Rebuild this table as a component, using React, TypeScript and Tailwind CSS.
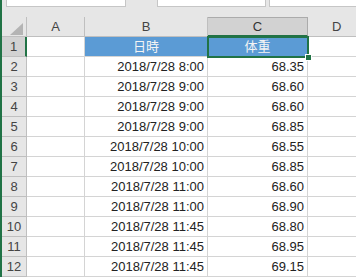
import React from 'react';

const rows: [string, string][] = [
    ['2018/7/28 8:00', '68.35'],
    ['2018/7/28 9:00', '68.60'],
    ['2018/7/28 9:00', '68.60'],
    ['2018/7/28 9:00', '68.85'],
    ['2018/7/28 10:00', '68.55'],
    ['2018/7/28 10:00', '68.85'],
    ['2018/7/28 11:00', '68.60'],
    ['2018/7/28 11:00', '68.90'],
    ['2018/7/28 11:45', '68.80'],
    ['2018/7/28 11:45', '68.95'],
    ['2018/7/28 11:45', '69.15'],
];

const font = { fontFamily: '"Liberation Sans", "Noto Sans CJK JP", sans-serif' };

export default function App() {
    return (
        <div
            className="w-[356px] h-[277px] overflow-hidden bg-white border-l-2 border-[#217346] text-[13px] text-[#222]"
            style={font}
        >
            {/* formula bar strip */}
            <div className="h-[17px] bg-[#e6e6e6] flex items-start">
                <div className="ml-[4px] w-[120px] h-[7px] bg-white border-x border-b border-[#c6c6c6]" />
                <div className="ml-[31px] w-[109px] h-[7px] bg-white border-x border-b border-[#c6c6c6]" />
                <div className="ml-[3px] flex-1 h-[7px] bg-white border-l border-b border-[#c6c6c6]" />
            </div>

            <div className="grid grid-cols-[25px_58px_123px_100px_1fr] auto-rows-[20px]">
                {/* column headers */}
                <div className="bg-[#e6e6e6] border-r border-b border-[#bfbfbf] relative">
                    <svg className="absolute left-[8px] top-[6px]" width="13" height="12" viewBox="0 0 13 12">
                        <polygon points="13,0 13,12 0,12" fill="#b4b4b4" />
                    </svg>
                </div>
                <div className="bg-[#e6e6e6] border-r border-b border-[#bfbfbf] flex items-center justify-center text-[#444]">A</div>
                <div className="bg-[#e6e6e6] border-r border-b border-[#bfbfbf] flex items-center justify-center text-[#444]">B</div>
                <div className="bg-[#d2d2d2] border-r border-t border-[#ababab] border-b-2 border-b-[#217346] flex items-center justify-center text-[#333]">C</div>
                <div className="bg-[#e6e6e6] border-b border-[#bfbfbf] flex items-center pl-[24px] text-[#444]">D</div>

                {/* row 1 */}
                <div className="bg-[#d2d2d2] border-r-2 border-r-[#217346] border-b border-[#bfbfbf] flex items-center justify-center text-[#444]">1</div>
                <div className="border-r border-b border-[#d4d4d4]" />
                <div className="bg-[#5b9bd5] border-r border-b border-[#d4d4d4] flex items-center justify-center text-[#f4f4f4]">日時</div>
                <div className="bg-[#5b9bd5] border-r border-b border-[#d4d4d4] flex items-center justify-center text-[#f4f4f4] relative">
                    体重
                    <div className="absolute -left-[1px] -top-[1px] -right-[2px] -bottom-[2px] border-2 border-[#217346]" />
                    <div className="absolute -right-[5px] -bottom-[5px] w-[7px] h-[7px] bg-[#217346] border border-white" />
                </div>
                <div className="border-b border-[#d4d4d4]" />

                {rows.map(([date, weight], i) => (
                    <React.Fragment key={i}>
                        <div className="bg-[#e6e6e6] border-r border-b border-[#bfbfbf] flex items-center justify-center text-[#444]">
                            {i + 2}
                        </div>
                        <div className="border-r border-b border-[#d4d4d4]" />
                        <div className="border-r border-b border-[#d4d4d4] flex items-center justify-end pr-[3px]">{date}</div>
                        <div className="border-r border-b border-[#d4d4d4] flex items-center justify-end pr-[3px]">{weight}</div>
                        <div className="border-b border-[#d4d4d4]" />
                    </React.Fragment>
                ))}
            </div>
        </div>
    );
}
